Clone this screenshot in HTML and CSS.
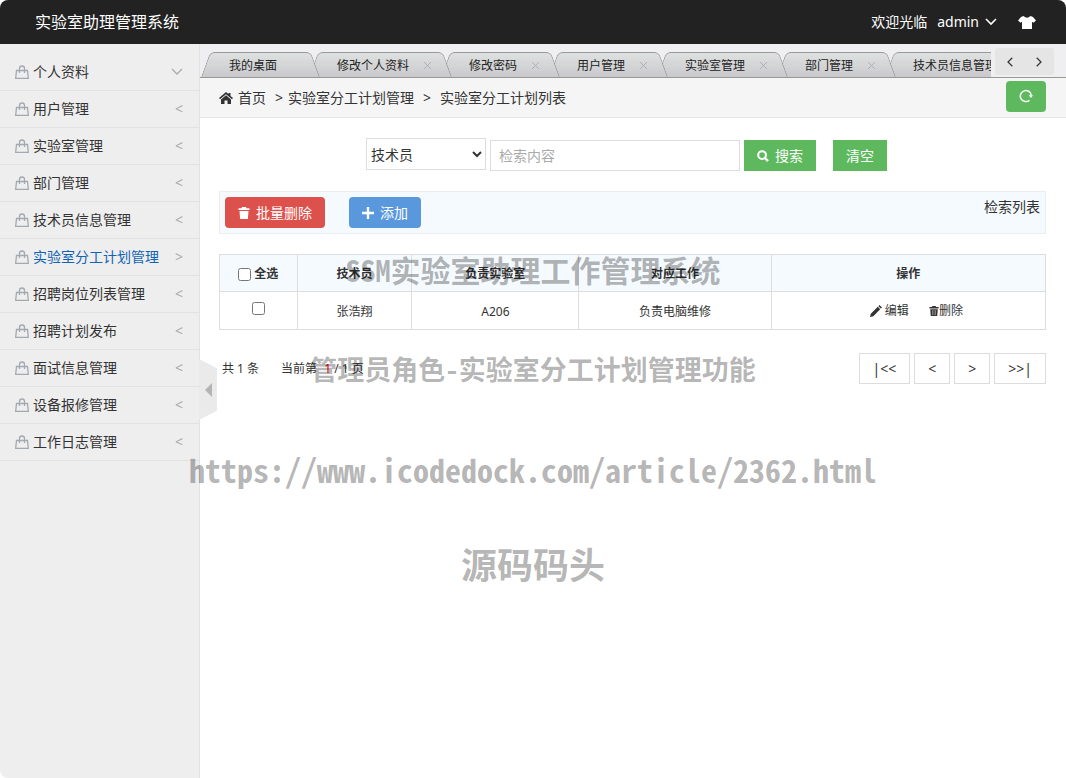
FILE: index.html
```html
<!DOCTYPE html>
<html lang="zh-CN">
<head>
<meta charset="utf-8">
<title>实验室助理管理系统</title>
<link rel="stylesheet" href="styles.css">
</head>
<body>
<svg class="sprite" aria-hidden="true">
  <symbol id="bag" viewBox="0 0 14 14"><path d="M1.500 5.500h11l.8 7.800H.7zM4.500 8V3.500a2.500 2.500 0 0 1 5 0V8" fill="none" stroke="currentColor" stroke-width="1.300"/></symbol>
  <symbol id="trash" viewBox="0 0 12 12"><path d="M4 0h4l.5 1.200H11.500v1.800H.5V1.200h3zM1.500 4h9l-.6 8H2.100z" fill="currentColor"/><path class="ribs" d="M4.200 5v6M6 5v6M7.800 5v6" stroke-width=".9"/></symbol>
  <symbol id="cross" viewBox="0 0 9 9"><path d="M1 1l7 7M8 1L1 8" fill="none" stroke="currentColor"/></symbol>
</svg>
<div class="app">
  <header class="header">
    <h1 class="brand">实验室助理管理系统</h1>
    <div class="user">
      <span>欢迎光临</span>
      <button class="account" type="button">admin
        <svg width="12" height="8" viewBox="0 0 12 8"><path d="M1 1l5 5 5-5" fill="none" stroke="currentColor" stroke-width="1.6"/></svg>
      </button>
      <button class="skin" type="button" aria-label="换肤">
        <svg width="18" height="13" viewBox="0 0 18 13"><path d="M5.500 0Q9 3.500 12.500 0L15 1l3 3.500-2.500 2.300L14 5.800V13H4V5.800L2.500 6.800 0 4.500 3 1z" fill="currentColor"/></svg>
      </button>
    </div>
  </header>
  <div class="body">
    <aside class="sidebar">
      <nav class="menu">
        <a class="menu-item" href="#"><svg class="bag"><use href="#bag"/></svg><span class="menu-text">个人资料</span><svg class="menu-open" viewBox="0 0 12 8"><path d="M1 1l5 5 5-5" fill="none" stroke="currentColor" stroke-width="1.3"/></svg></a>
        <a class="menu-item" href="#"><svg class="bag"><use href="#bag"/></svg><span class="menu-text">用户管理</span><span class="menu-arrow">&lt;</span></a>
        <a class="menu-item" href="#"><svg class="bag"><use href="#bag"/></svg><span class="menu-text">实验室管理</span><span class="menu-arrow">&lt;</span></a>
        <a class="menu-item" href="#"><svg class="bag"><use href="#bag"/></svg><span class="menu-text">部门管理</span><span class="menu-arrow">&lt;</span></a>
        <a class="menu-item" href="#"><svg class="bag"><use href="#bag"/></svg><span class="menu-text">技术员信息管理</span><span class="menu-arrow">&lt;</span></a>
        <a class="menu-item active" href="#"><svg class="bag"><use href="#bag"/></svg><span class="menu-text">实验室分工计划管理</span><span class="menu-arrow">&gt;</span></a>
        <a class="menu-item" href="#"><svg class="bag"><use href="#bag"/></svg><span class="menu-text">招聘岗位列表管理</span><span class="menu-arrow">&lt;</span></a>
        <a class="menu-item" href="#"><svg class="bag"><use href="#bag"/></svg><span class="menu-text">招聘计划发布</span><span class="menu-arrow">&lt;</span></a>
        <a class="menu-item" href="#"><svg class="bag"><use href="#bag"/></svg><span class="menu-text">面试信息管理</span><span class="menu-arrow">&lt;</span></a>
        <a class="menu-item" href="#"><svg class="bag"><use href="#bag"/></svg><span class="menu-text">设备报修管理</span><span class="menu-arrow">&lt;</span></a>
        <a class="menu-item" href="#"><svg class="bag"><use href="#bag"/></svg><span class="menu-text">工作日志管理</span><span class="menu-arrow">&lt;</span></a>
      </nav>
      <button class="fold" type="button" aria-label="收起菜单"><svg width="7" height="14" viewBox="0 0 7 14"><path d="M7 0v14L0 7z" fill="#b4b4b4"/></svg></button>
    </aside>
    <main class="main">
      <div class="tabbar">
        <ul class="tabs">
          <li class="tab tab-home">我的桌面</li>
          <li class="tab">修改个人资料<button class="close" type="button" aria-label="关闭"><svg width="9" height="9"><use href="#cross"/></svg></button></li>
          <li class="tab">修改密码<button class="close" type="button" aria-label="关闭"><svg width="9" height="9"><use href="#cross"/></svg></button></li>
          <li class="tab">用户管理<button class="close" type="button" aria-label="关闭"><svg width="9" height="9"><use href="#cross"/></svg></button></li>
          <li class="tab">实验室管理<button class="close" type="button" aria-label="关闭"><svg width="9" height="9"><use href="#cross"/></svg></button></li>
          <li class="tab">部门管理<button class="close" type="button" aria-label="关闭"><svg width="9" height="9"><use href="#cross"/></svg></button></li>
          <li class="tab">技术员信息管理<button class="close" type="button" aria-label="关闭"><svg width="9" height="9"><use href="#cross"/></svg></button></li>
        </ul>
        <div class="tab-nav">
          <button type="button" aria-label="向左"><svg width="6" height="10" viewBox="0 0 6 10"><path d="M5.300.8L1 5l4.300 4.200" fill="none" stroke="currentColor" stroke-width="1.200"/></svg></button>
          <button type="button" aria-label="向右"><svg width="6" height="10" viewBox="0 0 6 10"><path d="M.7.8L5 5 .7 9.200" fill="none" stroke="currentColor" stroke-width="1.200"/></svg></button>
        </div>
      </div>
      <div class="crumbs">
        <svg width="14" height="12" viewBox="0 0 14 12"><path d="M7 0l2.500 2.100V1h2v2.900L14 6l-1 1.200L7 2.200 1 7.200 0 6zM7 3.200l5 4.200V12H8.500V8.500h-3V12H2V7.400z" fill="#333"/></svg>
        <a class="crumb" href="#">首页</a>
        <span class="sep">&gt;</span>
        <span class="crumb">实验室分工计划管理</span>
        <span class="sep sep-last">&gt;</span>
        <span class="crumb">实验室分工计划列表</span>
        <button class="refresh" type="button" aria-label="刷新"><svg width="14" height="14" viewBox="0 0 14 14"><path d="M10.500 11.200A5.500 5.500 0 1 1 12.300 6.500" fill="none" stroke="#fff" stroke-width="1.500"/><path d="M9.700 6.300H14L12 9z" fill="#fff"/></svg></button>
      </div>
      <div class="content">
        <form class="search">
          <select class="field" aria-label="检索字段"><option>技术员</option></select>
          <input class="query" type="text" placeholder="检索内容" aria-label="检索内容">
          <button class="btn btn-green" type="button"><svg width="12" height="12" viewBox="0 0 13 13"><circle cx="5.500" cy="5.500" r="4.200" fill="none" stroke="#fff" stroke-width="2.200"/><path d="M8.500 8.500l3.500 3.500" stroke="#fff" stroke-width="2.500"/></svg>搜索</button>
          <button class="btn btn-green btn-clear" type="button">清空</button>
        </form>
        <div class="toolbar">
          <button class="btn btn-red" type="button"><svg width="12" height="12"><use href="#trash"/></svg>批量删除</button>
          <button class="btn btn-blue" type="button"><svg width="12" height="12" viewBox="0 0 12 12"><path d="M6 0v12M0 6h12" stroke="#fff" stroke-width="2.400"/></svg>添加</button>
          <span class="toolbar-title">检索列表</span>
        </div>
        <table class="list">
          <colgroup><col class="c1"><col class="c2"><col class="c3"><col class="c4"><col class="c5"></colgroup>
          <thead>
            <tr><th><label class="check"><input type="checkbox">全选</label></th><th>技术员</th><th>负责实验室</th><th>对应工作</th><th>操作</th></tr>
          </thead>
          <tbody>
            <tr>
              <td><label class="check"><input type="checkbox" aria-label="选择 张浩翔"></label></td>
              <td>张浩翔</td><td>A206</td><td>负责电脑维修</td>
              <td><div class="actions">
                <a class="edit" href="#"><svg width="12" height="12" viewBox="0 0 12 12"><path d="M0 12l.8-3.300L7.800 1.800 10.200 4.200l-6.900 7zM8.400 1.200L9.500 0 12 2.500l-1.200 1.100z" fill="currentColor"/></svg>编辑</a>
                <a class="remove" href="#"><svg width="10" height="10"><use href="#trash"/></svg>删除</a>
              </div></td>
            </tr>
          </tbody>
        </table>
        <div class="paging">
          <span>共 1 条</span>
          <span class="page-now">当前第 <b class="page-no">1</b> / 1 页</span>
          <div class="pager">
            <button type="button">|&lt;&lt;</button>
            <button type="button">&lt;</button>
            <button type="button">&gt;</button>
            <button type="button">&gt;&gt;|</button>
          </div>
        </div>
      </div>
    </main>
  </div>
  <div class="watermark">
    <p class="mark mark-a">SSM实验室助理工作管理系统</p>
    <p class="mark mark-b">管理员角色-实验室分工计划管理功能</p>
    <p class="mark mark-c">https://www.icodedock.com/article/2362.html</p>
    <p class="mark mark-d">源码码头</p>
  </div>
</div>
</body>
</html>
```

FILE: styles.css
```css
* { box-sizing: border-box; }
body {
  margin: 0;
  font: 14px/20px "Noto Sans", "Noto Sans CJK SC", sans-serif;
  color: #333;
  background: #fff;
}
a { color: inherit; text-decoration: none; }
button { font: inherit; color: inherit; border: 0; background: none; padding: 0; cursor: pointer; }
svg { flex: none; }
.sprite { position: absolute; width: 0; height: 0; }
.ribs { stroke: #fff; stroke-opacity: .5; }

.app {
  position: relative;
  display: flex;
  flex-direction: column;
  min-height: 100vh;
  border-radius: 8px;
  overflow: hidden;
}

.header {
  display: flex;
  align-items: center;
  justify-content: space-between;
  height: 44px;
  padding: 0 30px 0 35px;
  color: #fff;
  background: #222;
}
.brand { margin: 0; font-size: 16px; font-weight: 400; }
.user { display: flex; align-items: center; gap: 10px; }
.account { display: flex; align-items: center; gap: 6px; }
.skin { display: flex; margin-left: 11px; }

.body { display: flex; flex: 1; }
.sidebar {
  position: relative;
  z-index: 1;
  flex: none;
  width: 200px;
  padding-top: 10px;
  background: #eee;
  border-right: 1px solid #e2e2e2;
}
.menu-item {
  display: flex;
  align-items: center;
  height: 37px;
  padding: 0 16px 0 15px;
  border-bottom: 1px solid #e2e2e2;
}
.menu-item.active { color: #1263b3; }
.bag { width: 14px; height: 14px; margin-right: 4px; color: #a3a9b1; }
.menu-text { flex: 1; }
.menu-arrow { color: #aaa; }
.menu-open { width: 12px; height: 8px; color: #aaa; }
.fold {
  position: absolute;
  left: 100%;
  top: 315px;
  display: flex;
  align-items: center;
  width: 18px;
  height: 61px;
  padding-left: 6px;
  background: #eaeaea;
  clip-path: polygon(0 0, 100% 15%, 100% 85%, 0 100%);
}

.main { flex: 1; min-width: 0; }
.tabbar {
  display: flex;
  align-items: flex-end;
  height: 34px;
  padding: 0 12px 0 1px;
  background: #efeff1;
  border-bottom: 1px solid #999;
}
.tabs {
  display: flex;
  flex: 1;
  min-width: 0;
  margin: 0;
  padding: 0;
  list-style: none;
  overflow: hidden;
  font-size: 12px;
  color: #222;
}
.tab {
  position: relative;
  display: flex;
  flex: none;
  align-items: center;
  height: 25px;
  padding: 2px 9px 0 28px;
}
.tab-home { padding-right: 32px; }
.tab:nth-child(1) { z-index: 7; }
.tab:nth-child(2) { z-index: 6; }
.tab:nth-child(3) { z-index: 5; }
.tab:nth-child(4) { z-index: 4; }
.tab:nth-child(5) { z-index: 3; }
.tab:nth-child(6) { z-index: 2; }
.tab:nth-child(7) { z-index: 1; }
.tab::before, .tab::after {
  content: "";
  position: absolute;
  z-index: -1;
  top: 0;
  bottom: 0;
  border-top: 1px solid #999;
  background: linear-gradient(#dfe1e1, #c9c9cb);
}
.tab::before {
  left: 0;
  right: 50%;
  border-left: 1px solid #999;
  border-top-left-radius: 5px;
  transform: skewX(-20deg);
  transform-origin: 0 100%;
}
.tab::after {
  left: 50%;
  right: -11px;
  border-right: 1px solid #999;
  border-top-right-radius: 5px;
  transform: skewX(20deg);
  transform-origin: 100% 100%;
}
.close { display: flex; margin-left: 14px; color: #aab0b4; }
.tab-nav {
  display: flex;
  align-self: flex-start;
  width: 59px;
  height: 27px;
  margin: 4px 0 0 4px;
  background: #e5e5e6;
  border-radius: 3px;
}
.tab-nav button { display: flex; flex: 1; align-items: center; justify-content: center; }

.crumbs {
  display: flex;
  align-items: center;
  height: 40px;
  padding: 0 20px 0 19px;
  background: #f5f5f5;
  border-bottom: 1px solid #e5e5e5;
}
.crumbs > svg { margin-right: 5px; }
.sep { margin: 0 5px 0 9px; }
.sep-last { margin-right: 9px; }
.refresh {
  display: flex;
  align-items: center;
  justify-content: center;
  width: 40px;
  height: 31px;
  margin-left: auto;
  margin-bottom: 3px;
  border-radius: 4px;
  background: #5eb95e;
}

.content { padding: 20px 20px 0 19px; }
.search { display: flex; justify-content: center; align-items: flex-end; gap: 4px; padding: 0 12px 0 0; height: 33px; }
.field {
  align-self: flex-start;
  width: 120px;
  height: 32px;
  font: inherit;
  color: #333;
  background: #fff;
  border: 1px solid #ddd;
}
.query {
  width: 250px;
  height: 31px;
  padding: 0 8px;
  font: inherit;
  border: 1px solid #ddd;
}
.query::placeholder { color: #aaa; }
.btn {
  display: flex;
  align-items: center;
  gap: 6px;
  height: 31px;
  padding: 0 13px;
  color: #fff;
}
.btn-green { background: #5eb95e; }
.btn-clear { margin-left: 13px; }
.toolbar {
  display: flex;
  align-items: flex-start;
  gap: 24px;
  margin-top: 20px;
  padding: 5px;
  height: 43px;
  background: #f5fafe;
  border: 1px solid #ebeef0;
}
.toolbar .btn { border-radius: 4px; }
.btn-red { background: #dd514c; }
.btn-red .ribs { stroke: #dd514c; }
.btn-blue { background: #5a98de; }
.toolbar-title { margin-left: auto; }

.list {
  width: 100%;
  margin-top: 20px;
  table-layout: fixed;
  border-collapse: collapse;
  font-size: 12px;
}
.c1 { width: 9.4%; }
.c2 { width: 13.9%; }
.c3 { width: 20.2%; }
.c4 { width: 23.3%; }
.c5 { width: 33.2%; }
.list th, .list td { height: 38px; padding: 2px 0 0; border: 1px solid #ddd; text-align: center; }
.list th { height: 37px; background: #f5fafe; }
.check { display: flex; align-items: center; justify-content: center; gap: 3px; }
.check input { width: 13px; height: 13px; margin: 0; }
.list td .check { padding-bottom: 6px; }
.actions { display: flex; align-items: center; justify-content: center; gap: 20px; padding: 0 0 2px 16px; }
.edit { display: flex; align-items: center; gap: 3px; }
.remove { display: flex; align-items: center; }

.paging { display: flex; align-items: center; gap: 22px; margin-top: 23px; padding-left: 3px; font-size: 12px; }
.page-no { font-weight: 400; color: #e00; padding-left: 4px; }
.pager { display: flex; gap: 4px; margin-left: auto; font-size: 14px; }
.pager button { height: 31px; padding: 0 13px; min-width: 36px; border: 1px solid #ddd; background: #fff; }

.watermark {
  position: absolute;
  z-index: 2;
  top: 219px;
  left: 0;
  right: 0;
  pointer-events: none;
  text-align: center;
  font-family: "Noto Sans CJK SC", sans-serif;
  font-weight: 700;
  font-feature-settings: "hwid";
  line-height: 100px;
  color: rgba(0, 0, 0, .3);
}
.mark { margin: 0; }
.mark-a { font-size: 30px; }
.mark-b { font-size: 27px; }
.mark-c { font-size: 32px; }
.mark-d { font-size: 36px; line-height: 88px; }
```
